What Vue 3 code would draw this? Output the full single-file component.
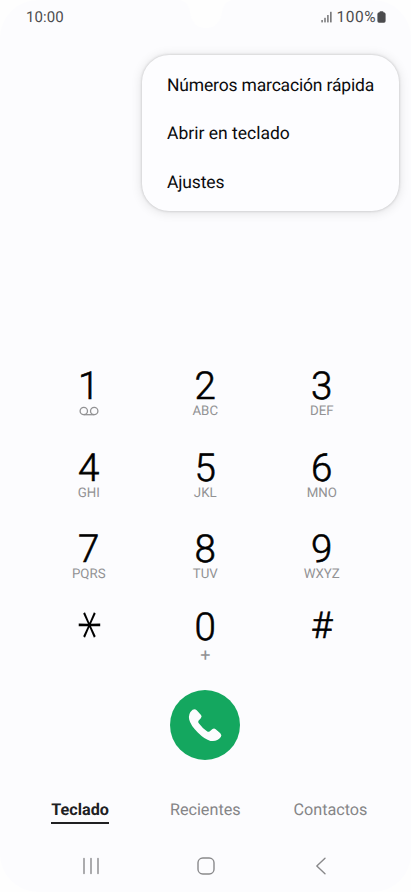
<script setup>
const menu = [
  { label: 'Números marcación rápida', cls: 'm1' },
  { label: 'Abrir en teclado', cls: 'm2' },
  { label: 'Ajustes', cls: 'm3' }
]
const keys = [
  { d: '1', s: '', voicemail: true, cls: 'one' },
  { d: '2', s: 'ABC' },
  { d: '3', s: 'DEF' },
  { d: '4', s: 'GHI' },
  { d: '5', s: 'JKL' },
  { d: '6', s: 'MNO' },
  { d: '7', s: 'PQRS' },
  { d: '8', s: 'TUV' },
  { d: '9', s: 'WXYZ' },
  { d: '*', s: '', cls: 'star' },
  { d: '0', s: '+', cls: 'zero' },
  { d: '#', s: '', cls: 'hash' }
]
</script>

<template>
  <div class="phone">
    <svg class="notch" width="52" height="29" viewBox="0 0 52 29">
      <path d="M0 0Q8 2 10 12Q12 28 26 28Q40 28 42 12Q44 2 52 0Z" fill="#fefefe" />
    </svg>
    <header class="status">
      <span class="clock">10:00</span>
      <span class="right">
        <svg width="12" height="12" viewBox="0 0 12 12" fill="#6b6b6d">
          <rect x="0.4" y="9" width="1.4" height="2.4" />
          <rect x="3.3" y="6.8" width="1.4" height="4.6" />
          <rect x="6.2" y="4" width="1.4" height="7.4" />
          <rect x="9.1" y="0.8" width="1.5" height="10.6" />
        </svg>
        <span class="pct">100%</span>
        <svg width="9" height="12" viewBox="0 0 9 12">
          <path d="M2.5 1.2Q2.5.2 3.5.2H5.5Q6.5.2 6.5 1.2Q8.6 1.2 8.6 3V10Q8.6 11.8 7 11.8H2Q.4 11.8.4 10V3Q.4 1.2 2.5 1.2Z" fill="#4b4b4d" />
        </svg>
      </span>
    </header>

    <nav class="menu">
      <div v-for="m in menu" :key="m.label" class="item"><span :class="m.cls">{{ m.label }}</span></div>
    </nav>

    <main class="pad">
      <div v-for="k in keys" :key="k.d" class="key" :class="k.cls">
        <span class="digit">{{ k.d }}</span>
        <span v-if="k.s || k.voicemail" class="sub">
          <svg v-if="k.voicemail" width="20" height="10" viewBox="0 0 20 10" fill="none" stroke="#929294" stroke-width="1.3">
            <circle cx="4.8" cy="5" r="3.7" />
            <circle cx="15.2" cy="5" r="3.7" />
            <path d="M4.8 8.7H15.2" />
          </svg>
          <template v-else>{{ k.s }}</template>
        </span>
      </div>
    </main>

    <div class="callrow">
      <button class="call" aria-label="Llamar">
        <svg width="70" height="70" viewBox="0 0 70 70">
          <path d="M22.6 19.8Q24.8 18.3 26.7 20.2L31 25Q32.3 26.6 30.8 28.2L28.5 30.7Q27.8 31.8 28.6 33.1Q32.2 38.2 37.3 41.5Q38.5 42.2 39.5 41.4L42.5 39Q44.1 37.9 45.7 39.2L50.3 43.2Q52.2 45 50.8 47.1Q47.2 52 40.5 50.9Q34.8 49.7 27.8 42.6Q20.4 35.2 19.2 29.6Q18 23.5 22.6 19.8Z" fill="#fcfcfe" />
        </svg>
      </button>
    </div>

    <div class="tabs">
      <div class="tab active"><span>Teclado</span></div>
      <div class="tab"><span>Recientes</span></div>
      <div class="tab"><span>Contactos</span></div>
    </div>

    <footer class="nav">
      <svg width="18" height="18" viewBox="0 0 18 18" stroke="#89898b" stroke-width="1.4" stroke-linecap="round">
        <path d="M2 1.5V16.5M9 1.5V16.5M16 1.5V16.5" />
      </svg>
      <svg width="18" height="18" viewBox="0 0 18 18" fill="none" stroke="#89898b" stroke-width="1.4">
        <rect x="1" y="1" width="16" height="16" rx="4.8" />
      </svg>
      <svg width="18" height="18" viewBox="0 0 18 18" fill="none" stroke="#89898b" stroke-width="1.4" stroke-linecap="round" stroke-linejoin="round">
        <path d="M13 1.2L4.8 9L13 16.8" />
      </svg>
    </footer>
  </div>
</template>

<style>
body { background: #fefefe; }
</style>

<style scoped>
.phone {
  position: relative;
  box-sizing: border-box;
  width: 411px;
  height: 892px;
  background: #fcfcfe;
  border-radius: 38px;
  overflow: hidden;
  font-family: Roboto, "Noto Sans", sans-serif;
  text-rendering: geometricPrecision;
  color: #0b0b0d;
  display: flex;
  flex-direction: column;
}
.notch { position: absolute; left: 180px; top: 0; }
.status {
  height: 34px;
  flex: none;
  display: flex;
  justify-content: space-between;
  padding: 0 25px 0 26px;
  align-items: center;
  font-size: 15px;
  line-height: 34px;
  color: #4d4d4f;
}
.clock { letter-spacing: 0.1px; }
.right { display: flex; align-items: center; }
.pct { margin: 0 1px 0 4px; font-size: 15.5px; letter-spacing: 0.5px; }
.menu {
  position: absolute;
  left: 142px;
  top: 55px;
  width: 257px;
  height: 156px;
  box-sizing: border-box;
  padding: 6.5px 0 0 25px;
  border-radius: 27px;
  background: #fdfdff;
  box-shadow: 0 0 3px rgba(0, 0, 0, 0.2), 0 1px 12px rgba(0, 0, 0, 0.12);
}
.item { height: 48.5px; line-height: 48.5px; font-size: 17.5px; white-space: nowrap; }
.m1 { letter-spacing: -0.17px; }
.m3 { letter-spacing: -0.15px; }
.pad {
  margin-top: 328px;
  padding-left: 30.5px;
  display: grid;
  grid-template-columns: repeat(3, 116.5px);
  grid-template-rows: 81.5px 81.5px 78px 82px;
  flex: none;
  height: 323px;
}
.key { display: flex; flex-direction: column; align-items: center; padding-top: 5px; }
.digit { font-size: 38.5px; line-height: 40px; height: 37px; color: #000; font-weight: 300; -webkit-text-stroke: 0.6px #000; }
.sub {
  height: 16px;
  line-height: 16px;
  font-size: 13.3px;
  color: #929294;
  display: flex;
  align-items: center;
}
.one .sub { height: 13px; }
.zero .sub { margin-top: 3px; font-size: 18px; }
.hash .digit { font-size: 37px; line-height: 38px; }
.star .digit {
  font-family: Inter, sans-serif;
  font-weight: 200;
  font-size: 64px;
  -webkit-text-stroke: 0;
  width: 40px;
  height: 40px;
  display: flex;
  justify-content: center;
  transform: translate(-8.5px, -3px) rotate(90deg) scaleX(1.06) scaleY(0.82);
}
.callrow { height: 70px; flex: none; display: flex; justify-content: center; margin-top: 5px; padding-right: 1px; }
.call { width: 70px; height: 70px; padding: 0; border: 0; border-radius: 50%; background: #14a75f; }
.call svg { display: block; }
.tabs {
  margin-top: 35px;
  padding-left: 17.5px;
  display: grid;
  grid-template-columns: repeat(3, 125.2px);
  height: 40px;
  flex: none;
  font-size: 16.2px;
  color: #858587;
}
.tab { display: flex; justify-content: center; }
.tab span { height: 29px; line-height: 29px; }
.tab.active span { color: #202022; font-size: 16.2px; font-weight: 700; border-bottom: 2.5px solid #202022; height: 27px; }
.nav { margin-top: 22px; display: flex; justify-content: space-between; padding: 0 81px 0 82px; }
</style>
